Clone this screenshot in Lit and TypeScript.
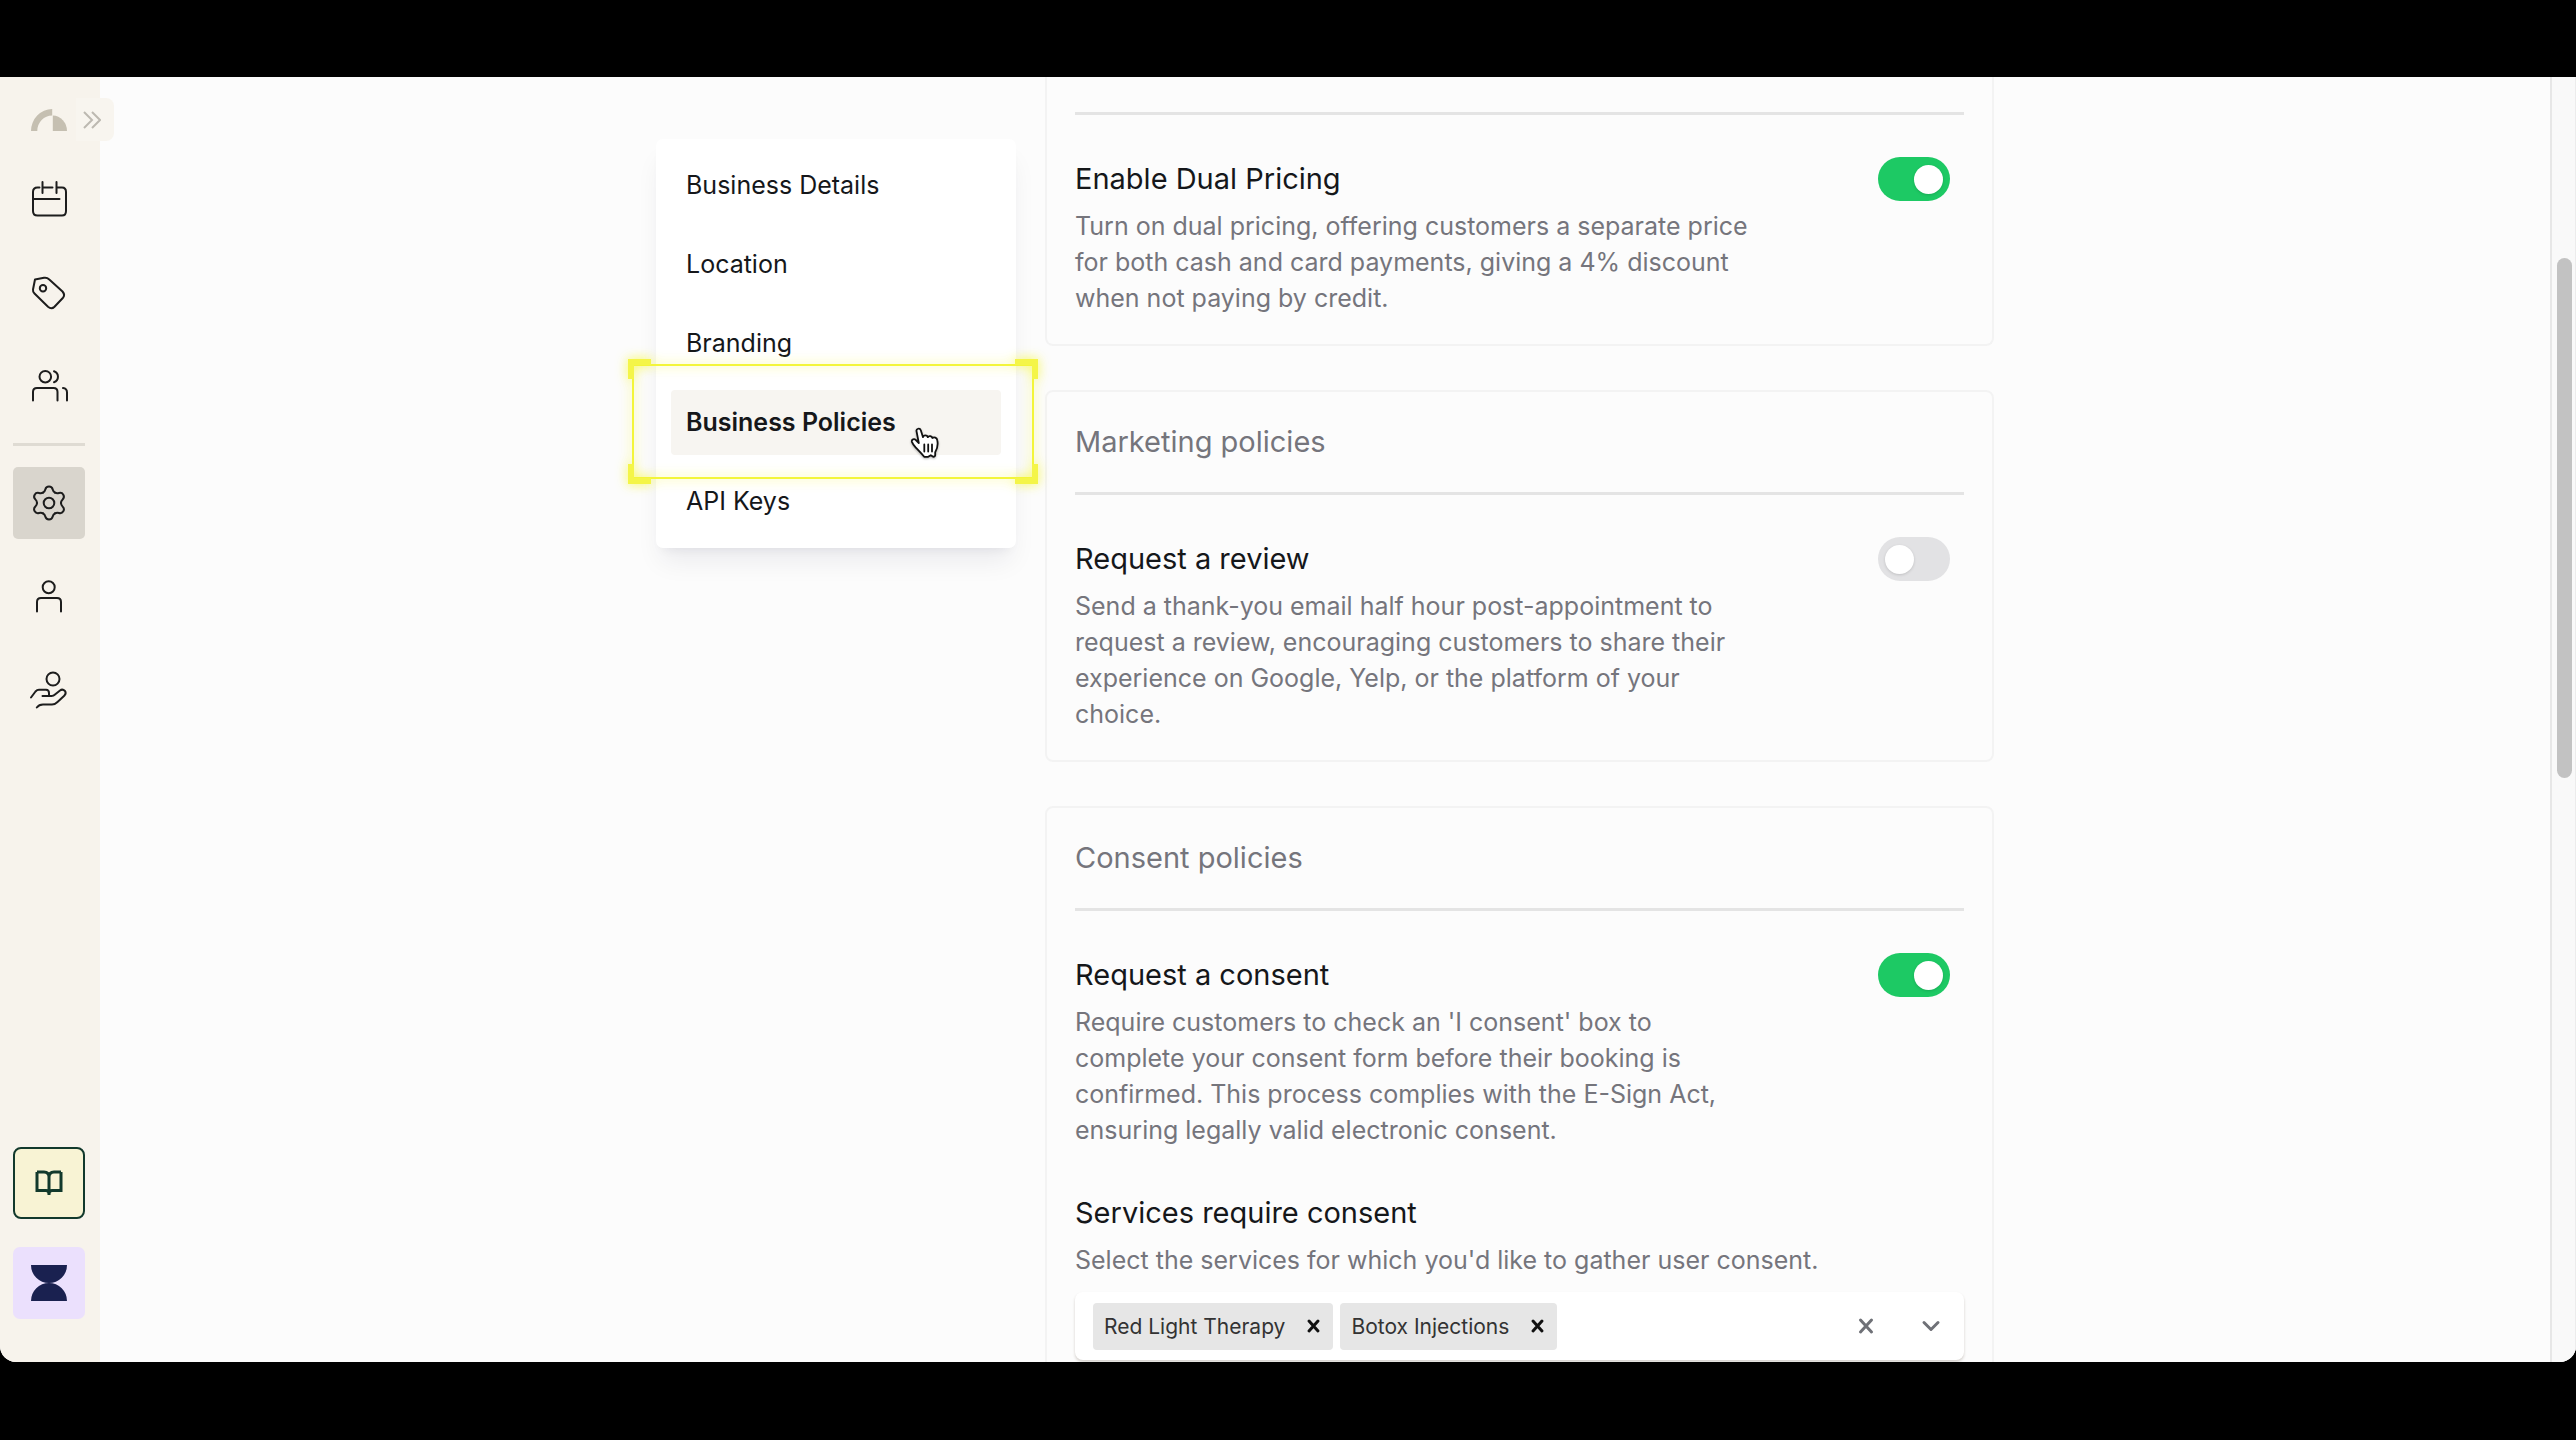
import { LitElement, html, svg, css, nothing, type TemplateResult } from "lit";
import { customElement, property, state } from "lit/decorators.js";
import { classMap } from "lit/directives/class-map.js";

const icons: Record<string, TemplateResult> = {
  calendar: svg`<path d="M8.5 6.5H6.5Q2 6.5 2 11V30Q2 34.5 6.5 34.5H31Q35 34.5 35 30V11Q35 6.5 31 6.5H25.5M11.5 6.5H21.5M11.5 1V12M25.5 1V12M2 18H28.5"/>`,
  tag: svg`<path d="M4 4.5L13 2.8Q16 2.3 18 4.3L31.5 16.5Q34.5 20 31.8 23L23.5 31.7Q20.5 34.7 17 31.7L3.5 18.5Q1.7 16.8 2 14.5Z"/><circle cx="12" cy="13.3" r="3.2"/>`,
  users: svg`<circle cx="14.3" cy="7.7" r="5.8"/><path d="M23 2.2A5.8 5.8 0 0 1 23 13.2M2 31.5V23Q2 19 6 19H22.5Q26.5 19 26.5 23V31.5M32 19Q36 19.5 36 23.5V31.5"/>`,
  settings: svg`<circle cx="18" cy="18" r="5.3"/>${[0, 60, 120, 180, 240, 300].map(
    (a) =>
      svg`<path transform=${`translate(18 18) rotate(${a})`} d="M-6 -10.4C-4.3 -11.4 -4 -12.4 -3.7 -13.6A3.8 3.8 0 0 1 3.7 -13.6C4 -12.4 4.3 -11.4 6 -10.4"/>`,
  )}`,
  person: svg`<circle cx="17.7" cy="8.3" r="6"/><path d="M6 32.5V23Q6 19 10 19H26Q30 19 30 23V32.5"/>`,
  hand: svg`<circle cx="22" cy="6" r="6.5"/><path d="M0 24.5L4.5 18.5Q6 16.8 8 16.8H15Q18 17 18 20V23M11.5 23H20.5Q22.5 23 24 21.5L29 17.5Q31.5 15.6 34 18Q35.5 20 33.5 22.5L26.5 29Q24 31.5 21 31.5H12Q8 31.5 5.8 34.5"/>`,
};

@customElement("app-sidebar")
class AppSidebar extends LitElement {
  static styles = css`
    :host {
      display: flex;
      flex: 0 0 100px;
      z-index: 1;
    }
    .bar {
      box-sizing: border-box;
      width: 100px;
      display: flex;
      flex-direction: column;
      gap: 22px;
      padding: 21px 0 43px 13px;
      background: #f7f3ec;
    }
    .top {
      display: flex;
      align-items: center;
      width: 101px;
      height: 43px;
    }
    .logo {
      display: block;
      margin-left: 18px;
    }
    button {
      display: flex;
      align-items: center;
      justify-content: center;
      padding: 0;
      border: 0;
      background: transparent;
      color: #1d1d1d;
    }
    .expand {
      flex: 1 0 0;
      height: 43px;
      margin-left: 9px;
      padding-right: 6px;
      border-radius: 0 8px 8px 0;
      background: #f8f5ef;
      color: #bdb9b1;
    }
    .item {
      width: 72px;
      height: 72px;
      border-radius: 5px;
    }
    .item.active {
      background: #d9d5cd;
    }
    .icon {
      overflow: visible;
      fill: none;
      stroke: currentColor;
      stroke-width: 2;
      stroke-linecap: round;
      stroke-linejoin: round;
    }
    hr {
      width: 72px;
      height: 3px;
      margin: -2px 0 -1px;
      border: 0;
      background: #dfdbd3;
    }
    .bottom {
      display: flex;
      flex-direction: column;
      gap: 28px;
      margin-top: auto;
    }
    .guide {
      box-sizing: border-box;
      border: 2px solid #12392c;
      border-radius: 8px;
      background: #f8f3d4;
      color: #12392c;
    }
    .account {
      border-radius: 7px;
      background: #ebe0fd;
    }
  `;

  private item(name: string, label: string, active = false) {
    return html`<button class=${classMap({ item: true, active })} aria-label=${label}>
      <svg class="icon" width="36" height="36" viewBox="0 0 36 36">${icons[name]}</svg>
    </button>`;
  }

  render() {
    return html`<nav class="bar" aria-label="Main">
      <div class="top">
        <svg class="logo" width="36" height="22" viewBox="0 0 36 22" fill="#c5bfb1">
          <path d="M0 22A21.5 22 0 0 1 21.2 0V6.5A15 15.5 0 0 0 6.3 22Z" />
          <path d="M21.8 6.5A14.5 15.5 0 0 1 36 22H21.8Z" />
        </svg>
        <button class="expand" aria-label="Expand sidebar">
          <svg width="18" height="18" viewBox="0 0 18 18" fill="none" stroke="currentColor" stroke-width="2">
            <path d="M1 1L9 9L1 17M9 1L17 9L9 17" />
          </svg>
        </button>
      </div>
      ${this.item("calendar", "Calendar")} ${this.item("tag", "Services")} ${this.item("users", "Customers")}
      <hr />
      ${this.item("settings", "Settings", true)} ${this.item("person", "Profile")} ${this.item("hand", "Payments")}
      <div class="bottom">
        <button class="item guide" aria-label="Guide">
          <svg width="28" height="26" viewBox="0 0 28 26" fill="none" stroke="currentColor" stroke-width="3">
            <path d="M2 2H9Q14 2 14 7V25M26 2H19Q14 2 14 7M2 2V20.5H11Q14 20.5 14 24Q14 20.5 17 20.5H26V2" />
          </svg>
        </button>
        <button class="item account" aria-label="Account">
          <svg width="36" height="36" viewBox="0 0 36 36" fill="#1a2150">
            <path d="M0 0H36A18 18 0 0 1 0 0ZM0 36A18 18 0 0 1 36 36Z" />
          </svg>
        </button>
      </div>
    </nav>`;
  }
}

@customElement("settings-menu")
class SettingsMenu extends LitElement {
  static styles = css`
    :host {
      display: block;
      flex: 0 0 360px;
      align-self: flex-start;
      margin-top: 62px;
      position: relative;
      z-index: 1;
    }
    ul {
      display: flex;
      flex-direction: column;
      gap: 14px;
      margin: 0;
      padding: 14px 15px;
      list-style: none;
      border-radius: 7px;
      background: #fff;
      box-shadow: 0 18px 27px -5px rgba(20, 20, 50, 0.07), 0 7px 11px -7px rgba(20, 20, 50, 0.08);
    }
    li {
      position: relative;
    }
    a {
      display: block;
      padding: 0 15px;
      border-radius: 4px;
      font-size: 25px;
      line-height: 65px;
      color: #15171a;
      text-decoration: none;
    }
    a.active {
      background: #f7f5f1;
      font-weight: 600;
    }
    .focus {
      position: absolute;
      inset: -31px -37px -29px -43px;
      pointer-events: none;
      filter: drop-shadow(0 0 6px rgba(246, 248, 50, 0.9));
    }
    .frame {
      position: absolute;
      inset: 5px 4px;
      border: 2px solid #f3f53a;
    }
    .corner {
      position: absolute;
      width: 17px;
      height: 14px;
      border: 0 solid #f4f548;
    }
    .tl { top: 0; left: 0; border-width: 6px 0 0 6px; }
    .tr { top: 0; right: 0; border-width: 6px 6px 0 0; }
    .bl { bottom: 0; left: 0; border-width: 0 0 6px 6px; }
    .br { bottom: 0; right: 0; border-width: 0 6px 6px 0; }
    .cursor {
      position: absolute;
      left: 239px;
      top: 37px;
      pointer-events: none;
      filter: drop-shadow(0 1px 1px rgba(0, 0, 0, 0.3));
    }
  `;

  @state() private current = "Business Policies";
  private items = ["Business Details", "Location", "Branding", "Business Policies", "API Keys"];

  private marker() {
    return html`<div class="focus">
        <div class="frame"></div>
        <span class="corner tl"></span><span class="corner tr"></span>
        <span class="corner bl"></span><span class="corner br"></span>
      </div>
      <svg class="cursor" width="30" height="33" viewBox="0 0 30 33" fill="#fff" stroke="#111" stroke-width="1.8" stroke-linejoin="round" stroke-linecap="round">
        <path d="M6.5 4.2C6 1.6 9.8 .6 10.8 3.2L13 10.2C13.4 7.8 17.2 7.8 17.8 10.2C18.8 8.4 21.8 8.8 22.4 11C24 9.6 27 10.6 27.3 13.4C28.2 18 27.5 21.5 25.2 25.2V27.6C25.4 29 24.6 29.8 23.2 29.8L20.8 28.2L18.2 29.8H14.2C11.4 26.2 8.2 23.2 5.6 20.4C4 18.4 2.8 17 1.9 14.8C1.3 12.4 4.2 11.2 5.8 13L8.8 16Z" />
        <path d="M14.3 17.5V24.5M18.2 17.5V24.5M22 17.5V24.5" fill="none" />
      </svg>`;
  }

  render() {
    return html`<nav aria-label="Settings">
      <ul>
        ${this.items.map(
          (label) => html`<li>
            <a href="#" class=${classMap({ active: label === this.current })}>${label}</a>
            ${label === this.current ? this.marker() : nothing}
          </li>`,
        )}
      </ul>
    </nav>`;
  }
}

@customElement("policy-option")
class PolicyOption extends LitElement {
  static styles = css`
    :host {
      display: block;
    }
    .row {
      display: flex;
      justify-content: space-between;
      padding-right: 14px;
    }
    .text {
      flex: 0 1 684px;
    }
    label {
      display: block;
      font-size: 29px;
      line-height: 44px;
      color: #15171a;
    }
    p {
      margin: 7px 0 0;
      font-size: 25px;
      line-height: 36px;
      color: #75757c;
    }
    input {
      appearance: none;
      flex: none;
      box-sizing: border-box;
      display: flex;
      align-items: center;
      width: 72px;
      height: 44px;
      margin: 0;
      padding: 0 7px;
      border-radius: 22px;
      background: #e2e2e4;
    }
    input::before {
      content: "";
      width: 29px;
      height: 29px;
      border-radius: 50%;
      background: #fff;
      box-shadow: 0 1px 3px rgba(0, 0, 0, 0.15);
    }
    input:checked {
      justify-content: flex-end;
      background: #1dc964;
    }
  `;

  @property() heading = "";
  @property() description = "";
  @property({ type: Boolean }) on = false;

  render() {
    return html`<div class="row">
      <div class="text">
        <label for="toggle">${this.heading}</label>
        <p id="description">${this.description}</p>
      </div>
      <input id="toggle" type="checkbox" role="switch" aria-describedby="description" .checked=${this.on} />
    </div>`;
  }
}

@customElement("service-picker")
class ServicePicker extends LitElement {
  static styles = css`
    :host {
      display: block;
    }
    label {
      display: block;
      font-size: 29px;
      line-height: 44px;
      color: #15171a;
    }
    p {
      margin: 7px 0 14px;
      font-size: 25px;
      line-height: 36px;
      color: #75757c;
    }
    .box {
      display: flex;
      align-items: center;
      gap: 7px;
      height: 68px;
      padding: 0 4px 0 18px;
      border-radius: 8px;
      background: #fff;
      box-shadow: 0 2px 3px rgba(60, 40, 20, 0.2);
    }
    .chip {
      display: flex;
      align-items: center;
      height: 47px;
      padding-left: 11px;
      border-radius: 4px;
      background: #e6e6e6;
      font-size: 21px;
      color: #333;
      white-space: nowrap;
    }
    button {
      display: flex;
      align-items: center;
      justify-content: center;
      align-self: stretch;
      padding: 0;
      border: 0;
      background: transparent;
      color: #6f7177;
    }
    .remove {
      width: 48px;
      padding-left: 8px;
      box-sizing: border-box;
      color: #111;
    }
    input {
      flex: 1 1 0;
      min-width: 0;
      border: 0;
      outline: 0;
      padding: 0;
      background: transparent;
      font: inherit;
      font-size: 21px;
    }
    .action {
      width: 58px;
    }
    svg {
      fill: none;
      stroke: currentColor;
      stroke-width: 3;
      stroke-linecap: round;
      stroke-linejoin: round;
    }
  `;

  @state() private chosen = ["Red Light Therapy", "Botox Injections"];

  render() {
    return html`<label for="services">Services require consent</label>
      <p id="hint">Select the services for which you'd like to gather user consent.</p>
      <div class="box">
        ${this.chosen.map(
          (name) => html`<span class="chip"
            >${name}<button
              class="remove"
              aria-label="Remove ${name}"
              @click=${() => (this.chosen = this.chosen.filter((n) => n !== name))}
            >
              <svg width="15" height="16" viewBox="0 0 15 16"><path d="M3 3L12 13M12 3L3 13" /></svg></button
          ></span>`,
        )}
        <input id="services" role="combobox" aria-expanded="false" aria-describedby="hint" />
        <button class="action" aria-label="Clear all" @click=${() => (this.chosen = [])}>
          <svg width="16" height="18" viewBox="0 0 16 18"><path d="M2.5 3L13.5 15M13.5 3L2.5 15" /></svg>
        </button>
        <button class="action" aria-label="Open list">
          <svg width="20" height="14" viewBox="0 0 20 14"><path d="M3 3.5L10 10.5L17 3.5" /></svg>
        </button>
      </div>`;
  }
}

@customElement("app-root")
class AppRoot extends LitElement {
  static styles = css`
    :host {
      box-sizing: border-box;
      display: flex;
      height: 100vh;
      padding: 77px 0 78px;
      background: #000;
      font-family: Inter, "Liberation Sans", sans-serif;
    }
    .window {
      flex: 1;
      display: flex;
      min-width: 0;
      overflow: hidden;
      border-radius: 0 0 16px 16px;
      background: #fcfcfc;
    }
    main {
      flex: 1;
      display: flex;
      justify-content: center;
      gap: 29px;
      min-width: 0;
      overflow: hidden;
    }
    .cards {
      flex: 0 1 949px;
      align-self: flex-start;
      display: flex;
      flex-direction: column;
      gap: 44px;
      min-width: 0;
    }
    .card {
      padding: 28px;
      border: 2px solid #f3f3f3;
      border-radius: 8px;
    }
    .card.cut {
      padding-top: 35px;
      border-top: 0;
      border-radius: 0 0 8px 8px;
    }
    h2 {
      margin: 0 0 28px;
      font-size: 29px;
      font-weight: 400;
      line-height: 44px;
      color: #75757c;
    }
    hr {
      height: 3px;
      margin: 0 0 42px;
      border: 0;
      background: #e4e4e4;
    }
    .picker {
      margin-top: 43px;
    }
    .scroll {
      flex: 0 0 26px;
      box-sizing: border-box;
      display: grid;
      grid-template-rows: 181fr 520fr 584fr;
      padding: 0 3px 0 5px;
      border-left: 2px solid #e7e7e7;
      border-right: 1px solid #ececec;
      background: #f9f9f9;
    }
    .thumb {
      grid-row: 2;
      border-radius: 8px;
      background: #c2c2c2;
    }
  `;

  render() {
    return html`<div class="window">
      <app-sidebar></app-sidebar>
      <main>
        <settings-menu></settings-menu>
        <div class="cards">
          <section class="card cut">
            <hr />
            <policy-option
              on
              heading="Enable Dual Pricing"
              description="Turn on dual pricing, offering customers a separate price for both cash and card payments, giving a 4% discount when not paying by credit."
            ></policy-option>
          </section>
          <section class="card">
            <h2>Marketing policies</h2>
            <hr />
            <policy-option
              heading="Request a review"
              description="Send a thank-you email half hour post-appointment to request a review, encouraging customers to share their experience on Google, Yelp, or the platform of your choice."
            ></policy-option>
          </section>
          <section class="card">
            <h2>Consent policies</h2>
            <hr />
            <policy-option
              on
              heading="Request a consent"
              description="Require customers to check an 'I consent' box to complete your consent form before their booking is confirmed. This process complies with the E-Sign Act, ensuring legally valid electronic consent."
            ></policy-option>
            <service-picker class="picker"></service-picker>
          </section>
        </div>
      </main>
      <div class="scroll"><div class="thumb"></div></div>
    </div>`;
  }
}
